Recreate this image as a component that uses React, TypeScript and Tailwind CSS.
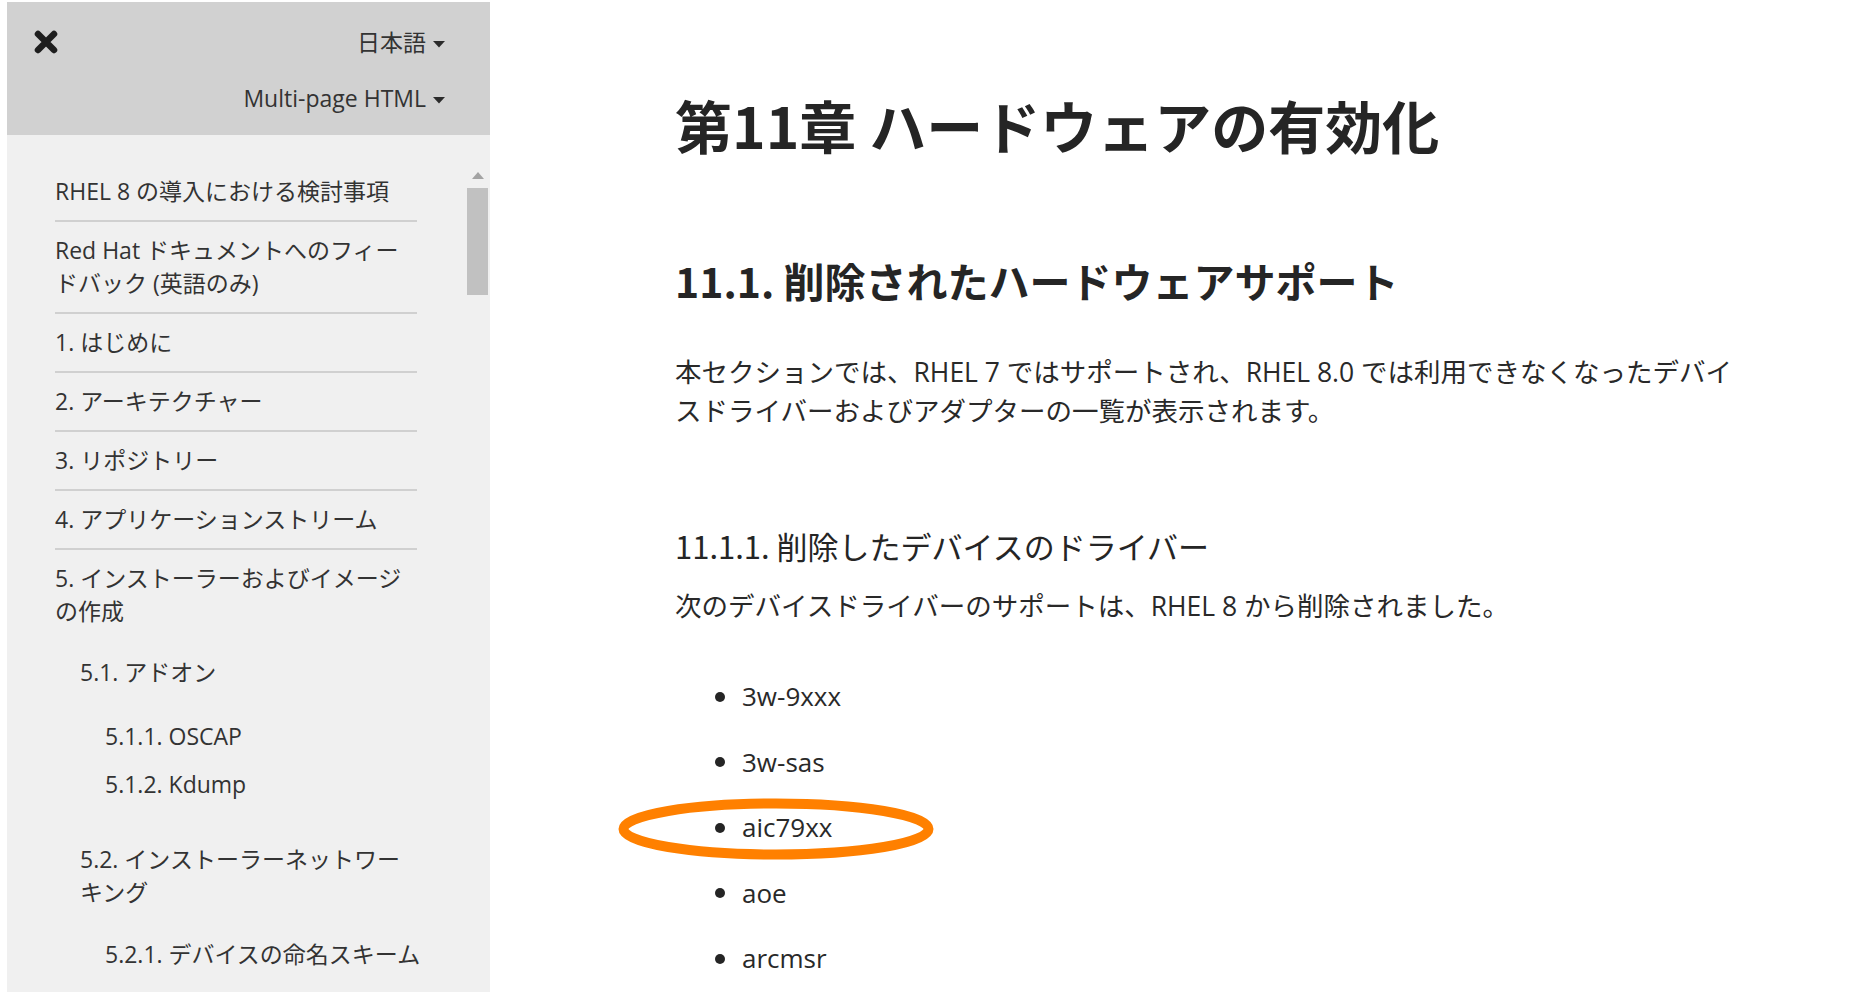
import React from 'react';

const drivers = ['3w-9xxx', '3w-sas', 'aic79xx', 'aoe', 'arcmsr'];

const topItems = [
  'RHEL 8 の導入における検討事項',
  'Red Hat ドキュメントへのフィードバック (英語のみ)',
  '1. はじめに',
  '2. アーキテクチャー',
  '3. リポジトリー',
  '4. アプリケーションストリーム',
];

const Caret = () => (
  <svg width="12" height="7" viewBox="0 0 12 7" className="ml-[7px] mt-[3px]">
    <path d="M0 0h12L6 6.5z" fill="#2b2b2b" />
  </svg>
);

const CloseIcon = () => (
  <svg width="26" height="26" viewBox="0 0 26 26">
    <path d="M5 5 L21 21 M21 5 L5 21" stroke="#1e1e1e" strokeWidth="6.5" strokeLinecap="round" />
  </svg>
);

const Sidebar = () => {
  return (
    <aside className="mt-[2px] ml-[7px] w-[483px] h-[990px] bg-[#f0f0f0] flex flex-col text-[#333] text-[23px]">
      {/* header with language + format switches */}
      <div className="h-[133px] bg-[#d1d1d1] flex items-start justify-between pl-[26px] pr-[45px]">
        <div className="mt-[27px]">
          <CloseIcon />
        </div>
        <div className="mt-[24px] flex flex-col items-end gap-[23px]">
          <div className="flex items-center leading-[33px]">
            日本語
            <Caret />
          </div>
          <div className="flex items-center leading-[33px]">
            Multi-page HTML
            <Caret />
          </div>
        </div>
      </div>

      <div className="flex flex-1 overflow-hidden">
        <nav className="w-[460px] pl-[48px] pt-[28px]">
          <ul className="w-[362px] leading-[33px]">
            {topItems.map((item) => (
              <li key={item} className="py-3 border-b-2 border-[#d0d0d0]">
                {item}
              </li>
            ))}
            <li className="pt-3">
              5. インストーラーおよびイメージの作成
              <ul className="pl-[25px] pt-[28px]">
                <li>
                  5.1. アドオン
                  <ul className="pl-[25px] pt-[31px]">
                    <li>5.1.1. OSCAP</li>
                    <li className="mt-[15px]">5.1.2. Kdump</li>
                  </ul>
                </li>
                <li className="mt-[42px]">
                  5.2. インストーラーネットワーキング
                  <ul className="pl-[25px] pt-[29px] w-[352px]">
                    <li>5.2.1. デバイスの命名スキーム</li>
                  </ul>
                </li>
              </ul>
            </li>
          </ul>
        </nav>

        {/* scrollbar */}
        <div className="w-[21px] flex flex-col items-center pt-[37px]">
          <svg width="12" height="7" viewBox="0 0 12 7">
            <path d="M6 0L12 7H0z" fill="#a3a3a3" />
          </svg>
          <div className="mt-[9px] w-[21px] h-[107px] bg-[#c1c1c1]" />
        </div>
      </div>
    </aside>
  );
};

export default function App() {
  return (
    <div className="relative w-[1864px] h-[996px] overflow-hidden bg-white flex font-['Open_Sans','Noto_Sans_CJK_JP',sans-serif]">
      <Sidebar />

      <main className="flex-1 pl-[185px] pt-[89px] text-[#292929]">
        <h1 className="text-[57px] leading-[70px] font-bold text-[#252525] font-['Noto_Sans_CJK_JP',sans-serif]">
          第11章 ハードウェアの有効化
        </h1>
        <h2 className="mt-[96px] text-[41px] leading-[50px] font-bold text-[#252525] font-['Noto_Sans_CJK_JP',sans-serif]">
          11.1. 削除されたハードウェアサポート
        </h2>
        <p className="mt-[48px] max-w-[1070px] text-[26.5px] leading-[39px]">
          本セクションでは、RHEL 7 ではサポートされ、RHEL 8.0 では利用できなくなったデバイスドライバーおよびアダプターの一覧が表示されます。
        </p>
        <h3 className="mt-[95px] text-[31px] leading-[40px] text-[#252525] font-['Noto_Sans_CJK_JP',sans-serif]">
          11.1.1. 削除したデバイスのドライバー
        </h3>
        <p className="mt-[21px] text-[26.5px] leading-[39px]">次のデバイスドライバーのサポートは、RHEL 8 から削除されました。</p>
        <ul className="mt-[51px] flex flex-col gap-[26.5px] pl-[40px]">
          {drivers.map((d) => (
            <li key={d} className="flex items-center text-[26px] leading-[39px]">
              <span className="w-[10px] h-[10px] rounded-full bg-[#252525] mr-[17px]" />
              {d}
            </li>
          ))}
        </ul>
      </main>

      {/* orange annotation ring around aic79xx */}
      <svg
        className="absolute left-[618px] top-[798px] pointer-events-none"
        width="316"
        height="62"
        viewBox="0 0 316 62"
      >
        <ellipse cx="158" cy="31" rx="152.5" ry="25.5" fill="none" stroke="#ff8000" strokeWidth="10" />
      </svg>
    </div>
  );
}
